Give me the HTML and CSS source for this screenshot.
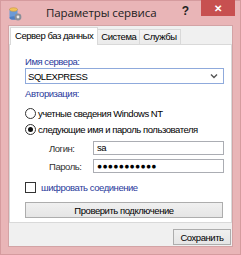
FILE: index.html
```html
<!DOCTYPE html>
<html lang="ru">
<head>
  <meta charset="UTF-8">
  <title>Параметры сервиса</title>
  <link rel="stylesheet" href="styles.css">
</head>
<body>

  <div class="window">
    <div class="titlebar">
      <svg class="app-icon" width="13" height="14" viewBox="0 0 13 14">
        <rect x="0.5" y="2" width="8" height="9" fill="#6b9ad6"/>
        <ellipse cx="4.5" cy="2.5" rx="4" ry="1.8" fill="#f2c25a" stroke="#c9953a" stroke-width="0.6"/>
        <ellipse cx="4.5" cy="11" rx="4" ry="1.8" fill="#4d7fc4"/>
        <circle cx="9" cy="10" r="3.4" fill="#8a8f99"/>
        <circle cx="9" cy="10" r="1.4" fill="#e9e9e9"/>
      </svg>
      <span class="title">Параметры сервиса</span>
      <span class="help">?</span>
      <span class="close">&#x2715;</span>
    </div>

    <div class="client">
      <div class="tabs">
        <div class="tab active">Сервер баз данных</div>
        <div class="tab">Система</div>
        <div class="tab">Службы</div>
      </div>

      <div class="panel">
        <div class="caption">Имя сервера:</div>
        <div class="combo">
          <span>SQLEXPRESS</span>
          <svg width="8" height="6" viewBox="0 0 8 6">
            <path d="M1 1.5 L4 4.5 L7 1.5" fill="none" stroke="#555" stroke-width="1.4"/>
          </svg>
        </div>

        <div class="caption auth">Авторизация:</div>
        <label class="radio-row first">
          <span class="radio"></span>
          учетные сведения Windows NT
        </label>
        <label class="radio-row">
          <span class="radio checked"></span>
          следующие имя и пароль пользователя
        </label>

        <div class="field">
          <span class="field-label">Логин:</span>
          <div class="field-input">sa</div>
        </div>
        <div class="field">
          <span class="field-label">Пароль:</span>
          <div class="field-input dots">&#9679;&#9679;&#9679;&#9679;&#9679;&#9679;&#9679;&#9679;&#9679;&#9679;&#9679;</div>
        </div>

        <label class="check-row">
          <span class="checkbox"></span>
          шифровать соединение
        </label>

        <button class="btn check-btn">Проверить подключение</button>
      </div>

      <div class="footer">
        <button class="btn save-btn">Сохранить</button>
      </div>
    </div>
  </div>

</body>
</html>
```

FILE: styles.css
```css
* {
  box-sizing: border-box;
  margin: 0;
  padding: 0;
}

body {
  font-family: 'Liberation Sans', Arial, sans-serif;
  font-size: 9.5px;
  letter-spacing: -0.45px;
  color: #000;
  background: #fff;
  white-space: nowrap;
}

.window {
  width: 241px;
  height: 255px;
  background-color: #e9b5b7;
  border: 1px solid #d59b9e;
  display: flex;
  flex-direction: column;
}

.titlebar {
  height: 24px;
  display: flex;
  align-items: flex-start;
}

.app-icon {
  margin: 6px 0 0 8px;
  flex-shrink: 0;
}

.title {
  margin: 4px 0 0 24px;
  font-family: 'Open Sans', 'Noto Sans', sans-serif;
  font-size: 11.5px;
  letter-spacing: -0.1px;
  color: #222;
}

.help {
  margin: 3px 0 0 auto;
  font-weight: bold;
  font-size: 12px;
  letter-spacing: 0;
  color: #222;
}

.close {
  width: 34px;
  height: 16px;
  margin: -1px 5px 0 12px;
  background-color: #c75050;
  color: #fff;
  font-size: 10px;
  font-weight: bold;
  display: flex;
  justify-content: center;
  align-items: center;
}

.client {
  flex: 1;
  margin: 0 7px 7px 7px;
  background-color: #f0f0f0;
  border: 1px solid #d3a3a5;
  display: flex;
  flex-direction: column;
}

.tabs {
  display: flex;
  align-items: flex-end;
  margin: 0 0 0 1px;
  height: 18px;
  position: relative;
  z-index: 1;
}

.tab {
  height: 15px;
  padding: 0 3px;
  border: 1px solid #d9d9d9;
  border-bottom: none;
  background: linear-gradient(#f3f3f3, #ebebeb);
  line-height: 14px;
}

.tab + .tab {
  margin-left: -1px;
}

.tab.active {
  height: 18px;
  padding: 0 4px;
  background: #fff;
  line-height: 16px;
  margin-bottom: -1px;
}

.panel {
  width: 223px;
  height: 179px;
  background-color: #fff;
  border: 1px solid #d9d9d9;
  padding: 10px 0 0 15px;
}

.caption {
  color: #2a3a9c;
  height: 13px;
  line-height: 13px;
}

.combo {
  width: 199px;
  height: 16px;
  border: 1px solid #8faadc;
  display: flex;
  align-items: center;
  justify-content: space-between;
  padding: 0 5px 0 2px;
}

.auth {
  margin-top: 3px;
}

.radio-row,
.check-row {
  display: flex;
  align-items: center;
  height: 16px;
}

.radio-row.first {
  margin-top: 5px;
}

.radio {
  width: 11px;
  height: 11px;
  border: 1px solid #333;
  border-radius: 50%;
  margin-right: 2px;
  display: flex;
  justify-content: center;
  align-items: center;
}

.radio.checked::after {
  content: '';
  width: 5px;
  height: 5px;
  border-radius: 50%;
  background-color: #111;
}

.field {
  display: flex;
  align-items: center;
  margin-top: 4px;
}

.field-label {
  width: 44px;
  margin-left: 24px;
  color: #333;
}

.field-input {
  width: 131px;
  height: 14px;
  border: 1px solid #abadb3;
  padding: 0 3px;
  line-height: 12px;
}

.dots {
  font-size: 8.5px;
  letter-spacing: 0.3px;
}

.check-row {
  margin-top: 6px;
  color: #2a3a9c;
}

.checkbox {
  width: 11px;
  height: 11px;
  border: 1px solid #333;
  margin-right: 5px;
}

.btn {
  font-family: 'Liberation Sans', Arial, sans-serif;
  font-size: 9.5px;
  letter-spacing: -0.45px;
  color: #000;
  height: 16px;
  border: 1px solid #adadad;
  background: linear-gradient(#f0f0f0, #e5e5e5);
}

.check-btn {
  margin-top: 7px;
  width: 198px;
}

.footer {
  display: flex;
  justify-content: flex-end;
  padding: 6px 1px 0 0;
}

.save-btn {
  width: 58px;
}
```
